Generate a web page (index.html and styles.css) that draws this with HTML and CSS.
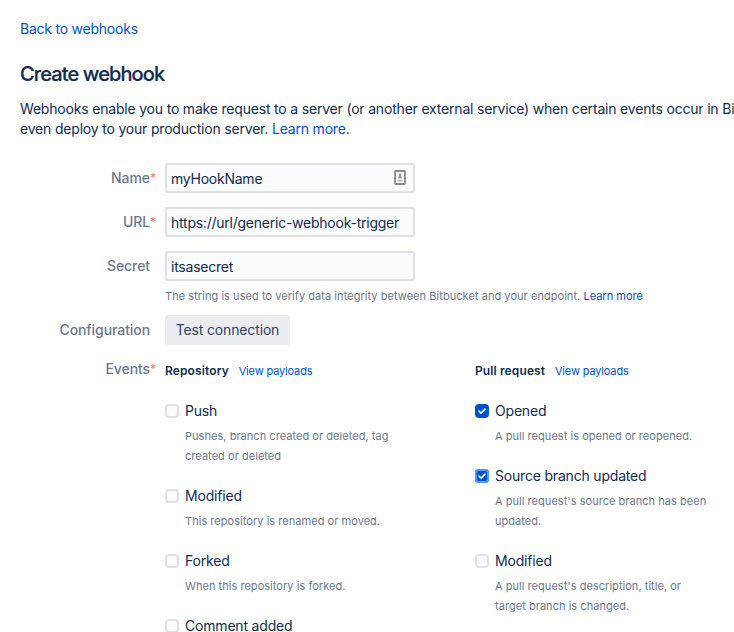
FILE: index.html
```html
<!DOCTYPE html>
<html lang="en">
<head>
<meta charset="utf-8">
<title>Create webhook</title>
<link rel="stylesheet" href="styles.css">
</head>
<body>
<main class="page">
  <a class="back" href="#">Back to webhooks</a>
  <h1>Create webhook</h1>
  <div class="intro">
    <p>Webhooks enable you to make request to a server (or another external service) when certain events occur in Bi</p>
    <p>even deploy to your production server. <a href="#">Learn more</a>.</p>
  </div>
  <form>
    <div class="row">
      <label class="label req" for="name">Name</label>
      <div class="field"><input id="name" type="text" value="myHookName">
        <svg class="key" width="12" height="15" viewBox="0 0 12 15"><rect x="1" y="1" width="10" height="13" rx=".5" fill="#f4f4f4" stroke="#8a8a8a" stroke-width="1.8"/><path d="M6 3.5v4" stroke="#999" stroke-width="2"/><path d="M4 7.5h4" stroke="#999" stroke-width="1.6"/><path d="M3.5 10.5h5" stroke="#b4b4b4" stroke-width="1.6"/></svg>
      </div>
    </div>
    <div class="row">
      <label class="label req" for="url">URL</label>
      <div class="field"><input id="url" type="text" value="https://url/generic-webhook-trigger"></div>
    </div>
    <div class="row secret">
      <label class="label" for="secret">Secret</label>
      <div class="field"><input id="secret" type="text" value="itsasecret"></div>
    </div>
    <p class="help"><span>The string is used to verify data integrity between Bitbucket and your endpoint.</span> <a href="#">Learn more</a></p>
    <div class="row config">
      <span class="label">Configuration</span>
      <button type="button">Test connection</button>
    </div>
    <div class="row events">
      <span class="label req">Events</span>
      <section>
        <h2>Repository <a href="#">View payloads</a></h2>
        <div class="ev"><i class="box"></i><b>Push</b><p>Pushes, branch created or deleted, tag<br>created or deleted</p></div>
        <div class="ev"><i class="box"></i><b>Modified</b><p>This repository is renamed or moved.</p></div>
        <div class="ev"><i class="box"></i><b>Forked</b><p>When this repository is forked.</p></div>
        <div class="ev"><i class="box"></i><b>Comment added</b></div>
      </section>
      <section class="pulls">
        <h2>Pull request <a href="#">View payloads</a></h2>
        <div class="ev"><i class="box on"><svg viewBox="0 0 14 14"><path d="M4 7.1l2 2 4-4"/></svg></i><b>Opened</b><p>A pull request is opened or reopened.</p></div>
        <div class="ev"><i class="box on focus"><svg viewBox="0 0 14 14"><path d="M4 7.1l2 2 4-4"/></svg></i><b>Source branch updated</b><p>A pull request's source branch has been<br>updated.</p></div>
        <div class="ev"><i class="box"></i><b>Modified</b><p>A pull request's description, title, or<br>target branch is changed.</p></div>
      </section>
    </div>
  </form>
</main>
</body>
</html>
```
FILE: styles.css
```css
* { box-sizing: border-box; margin: 0; padding: 0; }
html, body { height: 632px; overflow: hidden; background: #fff; }
body { font: 14px/20px Inter, sans-serif; color: #112b4f; letter-spacing: -.19px; }
a { color: #0052cc; text-decoration: none; }
.page { padding: 19px 0 0 20px; }
.back { display: block; height: 20px; letter-spacing: -.23px; }
h1 { margin-top: 23px; font-size: 20px; line-height: 24px; font-weight: 500; height: 24px; letter-spacing: -.89px; -webkit-text-stroke: .2px #112b4f; }
.intro { margin-top: 13px; white-space: nowrap; }
form { margin-top: 24px; }
.row { display: flex; height: 30px; margin-bottom: 14px; }
.label { width: 130px; margin-right: 15px; text-align: right; color: #6b778c; font-weight: 500; line-height: 30px; letter-spacing: -.08px; flex: none; }
.req { position: relative; }
.req::after { content: "*"; position: absolute; left: 130px; color: #ff7a66; font-weight: 500; font-size: 12px; }
.field { position: relative; width: 250px; }
input { display: block; width: 250px; height: 30px; border: 2px solid #dfe1e6; border-radius: 3px; background: #fafbfc; padding: 1px 4px 0; font: inherit; color: inherit; letter-spacing: -.24px; }
.key { position: absolute; left: 229px; top: 7px; }
.row.secret { margin-bottom: 5px; }
.help { margin-left: 145px; font-size: 11px; line-height: 20px; color: #6b778c; white-space: nowrap; letter-spacing: .05px; }
.help a { letter-spacing: 0; }
.row.config { margin: 9px 0 0; }
button { width: 125px; height: 30px; border: 0; border-radius: 3px; background: #ebecf0; color: #344563; font: inherit; letter-spacing: -.15px; }
.row.events { height: auto; margin: 16px 0 0; }
.events > .label { line-height: 16px; }
section { width: 310px; flex: none; }
.pulls { width: 259px; }
h2 { font-size: 12px; line-height: 20px; font-weight: 600; letter-spacing: .12px; }
h2 a { font-size: 11px; font-weight: 400; margin-left: 6.6px; letter-spacing: -.16px; }
.ev { display: grid; grid-template-columns: 20px 1fr; margin-top: 20px; }
.ev b { font-weight: 400; line-height: 20px; }
.ev p { grid-column: 2; margin-top: 5px; font-size: 11px; line-height: 20px; color: #6b778c; letter-spacing: .04px; }
.box { width: 14px; height: 14px; margin-top: 3px; border: 2px solid #dfe1e6; border-radius: 4px; background: #fafbfc; }
.box svg { display: block; width: 14px; height: 14px; }
.box path { fill: none; stroke: #fff; stroke-width: 1.5; stroke-linecap: round; stroke-linejoin: round; }
.on { border: 0; background: #0052cc; }
.focus { box-shadow: inset 0 0 0 2px #4c9aff; }
```
